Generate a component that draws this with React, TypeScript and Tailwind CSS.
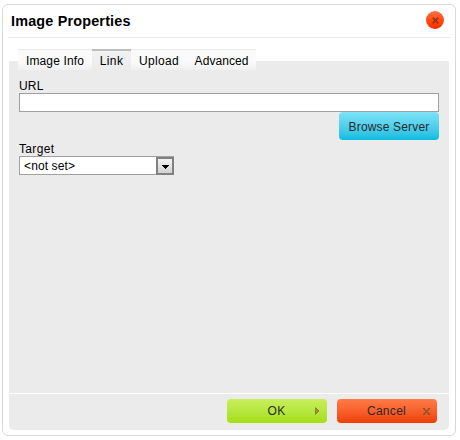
import type { ReactNode } from "react";

const tabs = [
  { label: "Image Info", width: "w-[74px]", text: "tracking-[0.14px]" },
  { label: "Link", width: "w-[39px]", text: "tracking-[0.4px]" },
  { label: "Upload", width: "w-[56px]", text: "tracking-[0.3px]" },
  { label: "Advanced", width: "w-[69px]", text: "tracking-[0.05px]" },
];

function Tab({ label, width, text, active }: { label: string; width: string; text: string; active: boolean }) {
  return (
    <button
      className={`${width} ${text} h-[21px] whitespace-nowrap border-t text-center ${
        active
          ? "border-t-2 border-[#bebebe] bg-linear-to-b from-[#f1f1f1] to-[#ebebeb] leading-[21px]"
          : "border-[#ebebeb] bg-linear-to-b from-[#fafafa] from-60% to-[#efefef] pt-px leading-[21px]"
      }`}
    >
      {label}
    </button>
  );
}

function FooterButton({ color, label, children }: { color: string; label: string; children: ReactNode }) {
  return (
    <button className={`flex h-6 w-[100px] items-center rounded-[4px] bg-linear-to-b ${color}`}>
      <span className="w-[83px] pl-[16px] text-center tracking-[0.3px] text-[#2b2b2b]">{label}</span>
      {children}
    </button>
  );
}

export default function App() {
  return (
    <div className="h-[440px] w-[460px] overflow-hidden bg-white pl-[2px] pt-[4px] font-['Liberation_Sans',Arial,sans-serif] text-[12px] text-black">
      <section className="flex h-[432px] w-[454px] flex-col rounded-[6px] border border-[#d9d9d9] bg-white pl-[6px] pr-[6px]">
        <header className="mr-[-1px] ml-[-1px] flex h-[33px] w-[443px] shrink-0 justify-between border-b border-[#ebebeb] pl-[3px] pr-[7px] pt-[6px]">
          <h1 className="text-[14.4px] font-bold leading-[20px] tracking-[0.18px]">Image Properties</h1>
          <button aria-label="Close" className="flex size-[18px] items-center justify-center rounded-full bg-linear-to-b from-[#ff7043] via-[#ff4b0c] to-[#ff2b00]">
            <svg width="7" height="7" viewBox="0 0 7 7" fill="none" stroke="#9b3310" strokeWidth="1.7">
              <path d="M.7.7 6.3 6.3M6.3.7.7 6.3" />
            </svg>
          </button>
        </header>
        <nav className="z-10 mt-[11px] flex h-[21px] shrink-0 pl-[9px]">
          {tabs.map((tab) => (
            <Tab key={tab.label} {...tab} active={tab.label === "Link"} />
          ))}
        </nav>
        <main className="-mt-[9px] flex h-[332px] w-[440px] shrink-0 flex-col rounded-t-[1px] bg-[#ebebeb] px-[10px] pt-[17px]">
          <label htmlFor="url" className="h-[15px] leading-[17px] tracking-[0.2px]">URL</label>
          <input id="url" className="h-[19px] w-[420px] border border-[#a0a0a0] bg-white px-1 outline-none" />
          <button className="h-7 w-[100px] self-end rounded-[4px] bg-linear-to-b from-[#7be3f8] to-[#00bce0] pt-[2px] text-center leading-[27px] tracking-[0.17px] text-[#2b2b2b]">
            Browse Server
          </button>
          <span className="mt-px h-[15px] leading-[17px] tracking-[0.35px]">Target</span>
          <button className="flex h-[19px] w-[155px] items-center justify-between border border-[#a0a0a0] bg-white pl-[4px] text-left">
            <span className="tracking-[0.12px]">&lt;not set&gt;</span>
            <span className="-mr-px flex h-[18px] w-[18px] items-center justify-center border-2 border-[#808080] bg-linear-to-b from-[#f3f3f3] to-[#d2d2d2] pt-[2px]">
              <svg width="7" height="4" viewBox="0 0 7 4" shapeRendering="crispEdges">
                <path d="M0 0h7v1H6v1H5v1H4v1H3V3H2V2H1V1H0z" />
              </svg>
            </span>
          </button>
        </main>
        <footer className="mt-px flex h-[36px] w-[440px] shrink-0 justify-end gap-[10px] rounded-b-[5px] bg-[#ebebeb] pr-[12px] pt-[5px]">
          <FooterButton label="OK" color="from-[#c8ef5b] to-[#a4df0c]">
            <svg className="ml-[5px]" width="5" height="8" viewBox="0 0 5 8">
              <path d="M.5.7 4 4 .5 7.3z" fill="#b08a45" stroke="#858434" strokeWidth="1" />
            </svg>
          </FooterButton>
          <FooterButton label="Cancel" color="from-[#ff7b46] to-[#ef3e00]">
            <svg className="ml-[3px] mt-px" width="7" height="7" viewBox="0 0 7 7" fill="none" stroke="#8c5529" strokeWidth="1.2">
              <path d="M.5.5 6.5 6.5M6.5.5.5 6.5M0 .5h2M5 .5h2M0 6.5h2M5 6.5h2" />
            </svg>
          </FooterButton>
        </footer>
      </section>
    </div>
  );
}
